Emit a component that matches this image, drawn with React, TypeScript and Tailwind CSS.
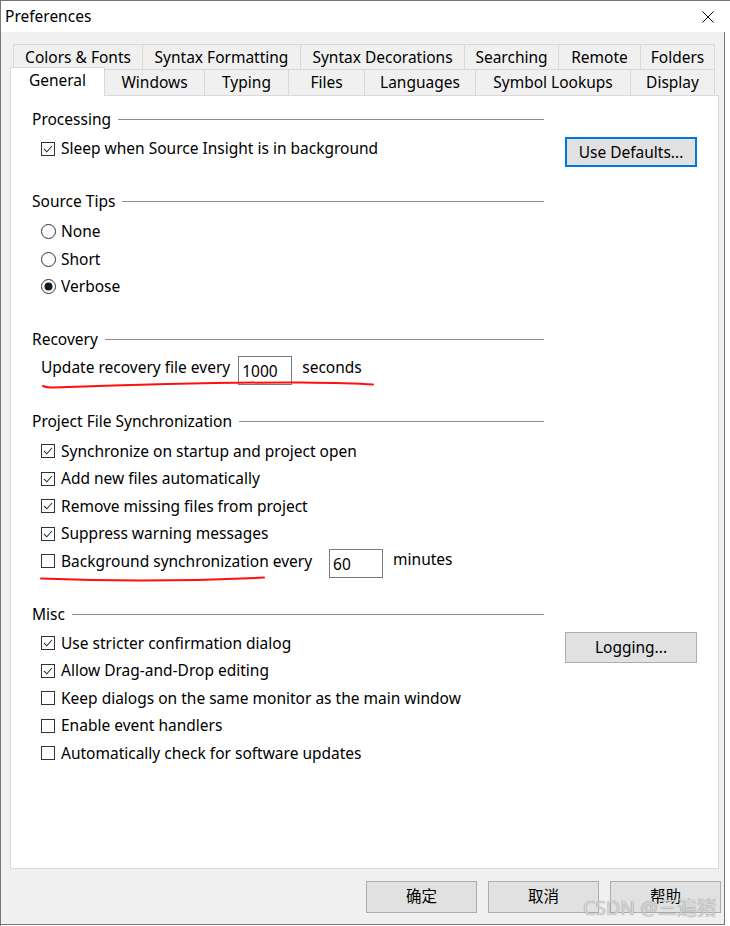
import type { ReactNode } from 'react';

const ROW1_TABS: [string, number][] = [
  ['Colors & Fonts', 130],
  ['Syntax Formatting', 158],
  ['Syntax Decorations', 164],
  ['Searching', 94],
  ['Remote', 82],
  ['Folders', 74],
];

const ROW2_TABS: [string, number][] = [
  ['General', 95],
  ['Windows', 100],
  ['Typing', 84],
  ['Files', 76],
  ['Languages', 111],
  ['Symbol Lookups', 155],
  ['Display', 84],
];

export default function App() {
  return (
    <div className="relative w-[730px] h-[926px] bg-white border-l border-t border-[#767676] text-[15.5px] text-black [font-family:'Noto_Sans','Noto_Sans_CJK_SC',sans-serif] overflow-hidden">
      <TitleBar />

      <div className="w-[724px] h-[893px] bg-[#f0f0f0] border-r border-b border-[#767676] pt-[12px]">
        {/* Tab strip: two rows, selected tab sits on the bottom row */}
        <div className="ml-[12px] h-[26px] flex">
          {ROW1_TABS.map(([label, width], i) => (
            <Tab key={label} label={label} width={width} first={i === 0} />
          ))}
        </div>
        <div className="ml-[9px] -mt-px h-[26px] flex items-end">
          {ROW2_TABS.map(([label, width], i) => (
            <Tab key={label} label={label} width={width} first={i === 0} selected={i === 0} />
          ))}
        </div>

        <GeneralPanel />

        <div className="mt-[12px] pr-[3px] flex justify-end gap-[11px]">
          <DialogButton label="确定" />
          <DialogButton label="取消" />
          <DialogButton label="帮助" />
        </div>
      </div>

      <RedMarks />

      {/* Watermark over the bottom-right corner */}
      <div className="absolute left-[582px] top-[893px] text-[19.5px] leading-[28px] text-[#d6d6d6] [text-shadow:0_0_1px_#7a7a7a] pointer-events-none">
        CSDN @三遍猪
      </div>
    </div>
  );
}

function TitleBar() {
  return (
    <div className="h-[31px] flex items-center justify-between pl-[4px] pr-[16px] bg-white">
      <span className="leading-none">Preferences</span>
      <svg width="12" height="12" viewBox="0 0 12 12" aria-hidden="true">
        <path d="M0.5 0.5 L11.5 11.5 M11.5 0.5 L0.5 11.5" stroke="#111" strokeWidth="1" fill="none" />
      </svg>
    </div>
  );
}

type TabProps = {
  label: string;
  width: number;
  first?: boolean;
  selected?: boolean;
};

function Tab({ label, width, first, selected }: TabProps) {
  const base = 'flex items-center justify-center border-t border-r border-[#d9d9d9] whitespace-nowrap';
  if (selected) {
    return (
      <div
        className={`${base} border-l relative z-10 h-[29px] -mb-px bg-white pb-[2px]`}
        style={{ width }}
      >
        {label}
      </div>
    );
  }
  return (
    <div className={`${base} ${first ? 'border-l' : ''} h-[26px] bg-[#f0f0f0]`} style={{ width }}>
      {label}
    </div>
  );
}

function GeneralPanel() {
  return (
    <div className="ml-[9px] w-[709px] h-[774px] bg-white border border-[#d9d9d9] pl-[21px] pr-[21px] pt-[10px]">
      {/* Processing */}
      <GroupHeader label="Processing" />
      <div className="mt-[1.5px]">
        <CheckRow label="Sleep when Source Insight is in background" checked>
          <button
            type="button"
            className="ml-auto mt-[7px] w-[132px] h-[30px] shrink-0 bg-[#e1e1e1] border-2 border-[#0078d7] leading-none"
          >
            Use Defaults...
          </button>
        </CheckRow>
      </div>

      {/* Source Tips */}
      <div className="mt-[25.5px]">
        <GroupHeader label="Source Tips" />
        <div className="mt-[2.5px]">
          <RadioRow label="None" />
          <RadioRow label="Short" />
          <RadioRow label="Verbose" checked />
        </div>
      </div>

      {/* Recovery */}
      <div className="mt-[25.5px]">
        <GroupHeader label="Recovery" />
        <div className="h-[27.5px] flex items-center pl-[9px] whitespace-nowrap">
          <span>Update recovery file every</span>
          <NumberBox value="1000" className="ml-[8px] mt-[7px]" />
          <span className="ml-[10px]">seconds</span>
        </div>
      </div>

      {/* Project File Synchronization */}
      <div className="mt-[26.5px]">
        <GroupHeader label="Project File Synchronization" />
        <div className="mt-[2.5px]">
          <CheckRow label="Synchronize on startup and project open" checked />
          <CheckRow label="Add new files automatically" checked />
          <CheckRow label="Remove missing files from project" checked />
          <CheckRow label="Suppress warning messages" checked />
          <CheckRow label="Background synchronization every">
            <NumberBox value="60" className="ml-[17px] mt-[5px]" />
            <span className="ml-[10px] -mt-[4px]">minutes</span>
          </CheckRow>
        </div>
      </div>

      {/* Misc */}
      <div className="mt-[25.5px]">
        <GroupHeader label="Misc" />
        <div className="mt-[1.5px]">
          <CheckRow label="Use stricter confirmation dialog" checked>
            <button
              type="button"
              className="ml-auto mt-[8px] w-[132px] h-[31px] shrink-0 bg-[#e1e1e1] border border-[#adadad] leading-none"
            >
              Logging...
            </button>
          </CheckRow>
          <CheckRow label="Allow Drag-and-Drop editing" checked />
          <CheckRow label="Keep dialogs on the same monitor as the main window" />
          <CheckRow label="Enable event handlers" />
          <CheckRow label="Automatically check for software updates" />
        </div>
      </div>
    </div>
  );
}

function GroupHeader({ label }: { label: string }) {
  return (
    <div className="w-[512px] h-[27.5px] flex items-center">
      <span className="whitespace-nowrap">{label}</span>
      <div className="flex-1 h-px bg-[#8c8c8c] ml-[7px]" />
    </div>
  );
}

type RowProps = {
  label: string;
  checked?: boolean;
  children?: ReactNode;
};

function CheckRow({ label, checked, children }: RowProps) {
  return (
    <div className="h-[27.5px] flex items-center pl-[9px] whitespace-nowrap">
      <svg width="14" height="14" viewBox="0 0 14 14" className="shrink-0" aria-hidden="true">
        <rect x="0.5" y="0.5" width="13" height="13" fill="#fff" stroke="#333" />
        {checked && <path d="M3 7 L5.8 9.8 L11 4" stroke="#333" strokeWidth="1.1" fill="none" />}
      </svg>
      <span className="ml-[6px]">{label}</span>
      {children}
    </div>
  );
}

function RadioRow({ label, checked }: RowProps) {
  return (
    <div className="h-[27.5px] flex items-center pl-[9px] whitespace-nowrap">
      <svg width="15" height="15" viewBox="0 0 15 15" className="shrink-0" aria-hidden="true">
        <circle cx="7.5" cy="7.5" r="7" fill="#fff" stroke="#333" />
        {checked && <circle cx="7.5" cy="7.5" r="4" fill="#1a1a1a" />}
      </svg>
      <span className="ml-[5px]">{label}</span>
    </div>
  );
}

function NumberBox({ value, className }: { value: string; className?: string }) {
  return (
    <div className={`w-[54px] h-[29px] shrink-0 border border-[#7a7a7a] bg-white flex items-center pl-[3px] pt-[2px] ${className ?? ''}`}>
      {value}
    </div>
  );
}

function DialogButton({ label }: { label: string }) {
  return (
    <button
      type="button"
      className="w-[111px] h-[32px] bg-[#e1e1e1] border border-[#adadad] leading-none"
    >
      {label}
    </button>
  );
}

// Hand-drawn red underlines from the annotated screenshot.
function RedMarks() {
  return (
    <svg
      className="absolute left-0 top-0 pointer-events-none"
      width="730"
      height="926"
      viewBox="0 0 730 926"
      aria-hidden="true"
    >
      <path
        d="M42 385 Q46 387 52 386.5 Q220 381 300 381.5 Q350 382 372 383.5"
        stroke="#ff1010"
        strokeWidth="2"
        fill="none"
        strokeLinecap="round"
      />
      <path
        d="M40 577.5 Q150 582 263 576.5"
        stroke="#ff1010"
        strokeWidth="2"
        fill="none"
        strokeLinecap="round"
      />
    </svg>
  );
}
